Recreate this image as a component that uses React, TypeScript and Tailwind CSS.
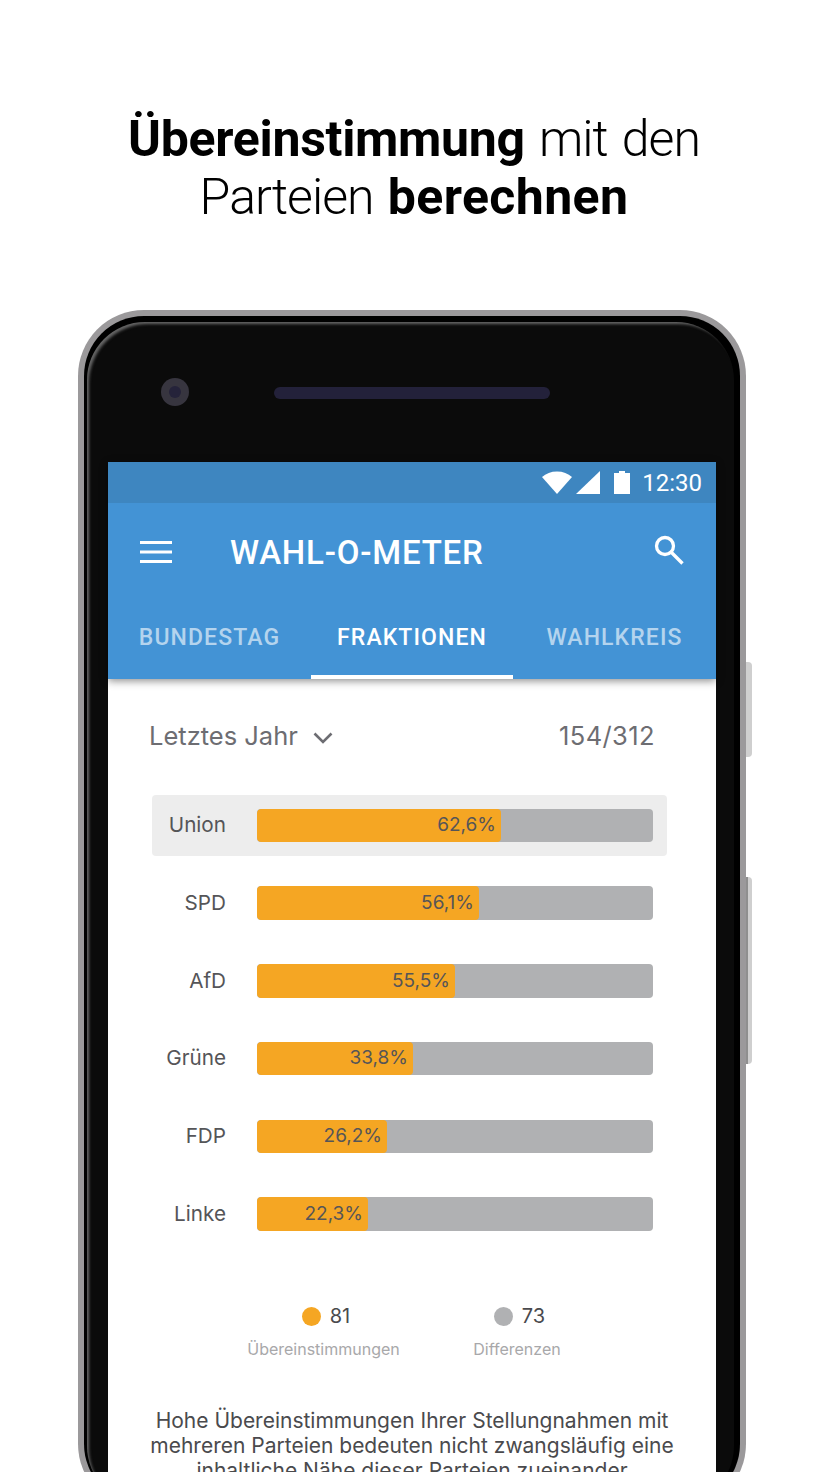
const bars = [
  { name: "Union", value: "62,6%", width: 244, active: true },
  { name: "SPD", value: "56,1%", width: 222 },
  { name: "AfD", value: "55,5%", width: 198 },
  { name: "Grüne", value: "33,8%", width: 156 },
  { name: "FDP", value: "26,2%", width: 130 },
  { name: "Linke", value: "22,3%", width: 111 },
];

function BarRow({ name, value, width, active }: { name: string; value: string; width: number; active?: boolean }) {
  return (
    <div className={`flex h-[61px] w-[515px] items-center rounded-[4px] ${active ? "bg-[#ededed]" : ""}`}>
      <div className="w-[74px] text-right text-[20.700px] leading-none text-[#555558]">{name}</div>
      <div className="ml-[31px] h-[33.5px] w-[396px] overflow-hidden rounded-[4px] bg-[#b0b1b3]">
        <div
          className="flex h-full items-center justify-end rounded-[4px] bg-[#f5a623] pr-[5px] text-[19px] text-[#555558]"
          style={{ width }}
        >
          {value}
        </div>
      </div>
    </div>
  );
}

function Legend({ color, count, label, className }: { color: string; count: string; label: string; className: string }) {
  return (
    <div className={`flex flex-col items-center ${className}`}>
      <div className="flex h-[24px] items-center gap-[9px] pl-[5px]">
        <span className={`h-[19px] w-[19px] rounded-full ${color}`} />
        <span className="text-[20px] leading-none text-[#4a4a4d]">{count}</span>
      </div>
      <div className="mt-[11px] text-[16px] leading-[20px] text-[#a8a8aa]">{label}</div>
    </div>
  );
}

export default function App() {
  return (
    <div className="h-[1472px] w-[828px] overflow-hidden bg-white" style={{ fontFamily: "Inter, sans-serif" }}>
      <h1
        className="pt-[110px] text-center text-[50px] font-light leading-[58px] tracking-[-1px] text-black [word-spacing:3px]"
        style={{ fontFamily: "Roboto, sans-serif" }}
      >
        <div><b className="font-bold tracking-[-0.3px]">Übereinstimmung</b> mit den</div>
        <div>Parteien <b className="font-bold tracking-[0.4px]">berechnen</b></div>
      </h1>

      <div className="relative ml-[78px] mt-[84px] h-[1200px] w-[668px]">
        <div className="absolute left-[668px] top-[352px] h-[95px] w-[6px] rounded-r-[4px] bg-[#cfcfcf]" />
        <div className="absolute left-[668px] top-[567px] h-[187px] w-[6px] rounded-r-[4px] border-l-[2px] border-[#8f8f8f] bg-[#cfcfcf]" />
        <div className="h-full rounded-[66px] bg-[#9b999b] p-[6px]">
          <div className="h-full rounded-[60px] bg-black pl-[3px] pr-[6px] pt-[6px]">
            <div className="h-full rounded-[58px] bg-[#0b0b0b] pl-[21px] pr-[18px] pt-[140px] shadow-[inset_3px_3px_3px_-1px_#666]">
              <div className="relative h-full bg-white">
                <div className="absolute left-[53px] top-[-84px] flex h-[28px] w-[28px] items-center justify-center rounded-full bg-[#37353f]">
                  <div className="h-[12px] w-[12px] rounded-full bg-[#25233a]" />
                </div>
                <div className="absolute left-[166px] top-[-75px] h-[12px] w-[276px] rounded-full bg-[#23213a]" />

                <div className="relative bg-[#4393d5] shadow-[0_2px_8px_rgba(0,0,0,0.45)]">
                  <div className="flex h-[41px] items-center justify-end bg-[#3e86c0] pr-[14px]">
                    <svg width="30" height="23" viewBox="0 0 30 23" className="mr-[4px]">
                      <path d="M0 6C4 2.500 9 0.500 15 0.500s11 2 15 5.500L15 23Z" fill="#fff" />
                    </svg>
                    <svg width="24" height="23" viewBox="0 0 24 23" className="mr-[14px]">
                      <path d="M0 23 24 0V23Z" fill="#fff" />
                    </svg>
                    <svg width="16" height="23" viewBox="0 0 16 23" className="mr-[12px]">
                      <path d="M5 0H11V2H16V23H0V2H5Z" fill="#fff" />
                    </svg>
                    <span className="text-[24px] leading-none text-white" style={{ fontFamily: "Roboto, sans-serif" }}>12:30</span>
                  </div>
                  <div className="flex h-[98px] items-center pl-[32px] pr-[32px]" style={{ fontFamily: "Roboto, sans-serif" }}>
                    <svg width="32" height="22" viewBox="0 0 32 22" className="shrink-0">
                      <path d="M0 0H32V3H0ZM0 9.500H32V12.500H0ZM0 19H32V22H0Z" fill="#fff" />
                    </svg>
                    <div className="ml-[58px] flex-1 text-[33px] font-medium leading-none tracking-[0.8px] text-white">WAHL-O-METER</div>
                    <svg width="30" height="30" viewBox="0 0 30 30" fill="none" stroke="#fff" strokeWidth="3.300" className="mb-[4px]">
                      <circle cx="11" cy="11" r="8.500" />
                      <path d="M17 17 28.500 28.500" />
                    </svg>
                  </div>
                  <div className="flex h-[78px] items-stretch text-[23px] font-medium leading-[27px] tracking-[1.100px]" style={{ fontFamily: "Roboto, sans-serif" }}>
                    <div className="w-[203px] pt-[23px] text-center text-[#b4d4ee]">BUNDESTAG</div>
                    <div className="w-[202px] border-b-[4px] border-white pt-[23px] text-center text-white">FRAKTIONEN</div>
                    <div className="w-[203px] pt-[23px] text-center text-[#b4d4ee]">WAHLKREIS</div>
                  </div>
                </div>

                <div className="flex h-[116px] items-center justify-between pl-[41px] pr-[61px] pb-[1px] text-[25.500px] text-[#6d6d72]">
                  <div className="flex items-center">
                    Letztes Jahr
                    <svg width="20" height="12" viewBox="0 0 20 12" fill="none" stroke="#6d6d72" strokeWidth="2.600" className="ml-[15px] mt-[3px]">
                      <path d="M1.500 1.500 10 10 18.500 1.500" />
                    </svg>
                  </div>
                  <div className="tracking-[0.4px]">154/312</div>
                </div>

                <div className="ml-[44px] flex flex-col gap-[16.700px]">
                  {bars.map((b) => (
                    <BarRow key={b.name} {...b} />
                  ))}
                </div>

                <div className="mt-[60px] flex">
                  <Legend color="bg-[#f5a623]" count="81" label="Übereinstimmungen" className="ml-[139px] w-[153px]" />
                  <Legend color="bg-[#b0b1b3]" count="73" label="Differenzen" className="ml-[73px] w-[88px]" />
                </div>

                <p className="mx-auto mt-[48.500px] w-[540px] text-center text-[21px] leading-[25px] text-[#4a4a4d]">
                  Hohe Übereinstimmungen Ihrer Stellungnahmen mit mehreren Parteien bedeuten nicht zwangsläufig eine inhaltliche Nähe dieser Parteien zueinander
                </p>
              </div>
            </div>
          </div>
        </div>
      </div>
    </div>
  );
}
